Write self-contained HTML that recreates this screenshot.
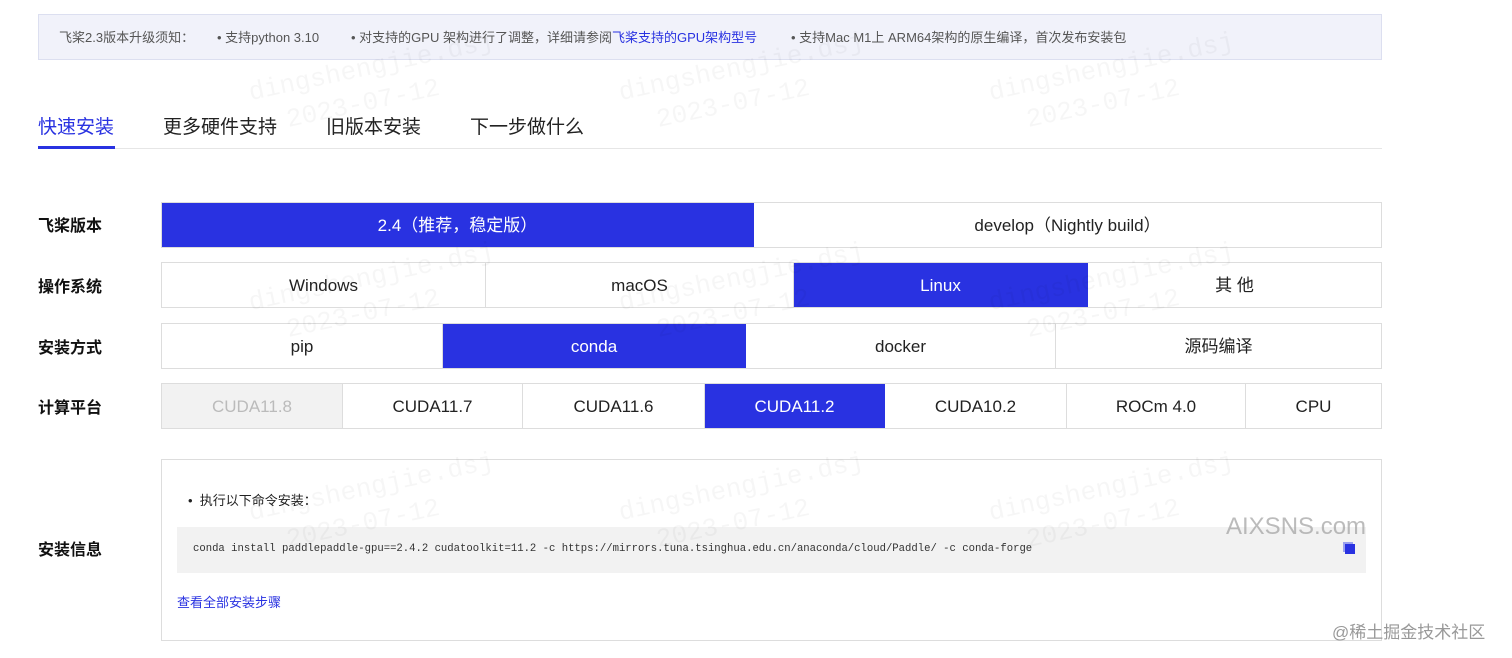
<!DOCTYPE html><html><head><meta charset="utf-8"><style>
body{margin:0;width:1512px;height:658px;background:#fff;font-family:"Liberation Sans","Noto Sans CJK SC",sans-serif;position:relative;overflow:hidden;color:#222}
.a{position:absolute}
.notice{left:38px;top:14px;width:1342px;height:44px;background:#f1f2fa;border:1px solid #dcdff0;font-size:13px;color:#555;line-height:46px}
.notice span{position:absolute;top:0}
.tab{top:112px;font-size:19px;color:#222}
.lbl{left:38px;font-size:16px;font-weight:bold;color:#111}
.row{left:161px;width:1219px;height:44px;border:1px solid #ddd;display:flex;box-sizing:content-box}
.row div{box-sizing:border-box;border-right:1px solid #ddd;text-align:center;line-height:46px;font-size:17px;color:#222;flex:none}
.row div:last-child{border-right:none}
.row .on{background:#2932e1;color:#fff;border-color:#2932e1}
.row .dis{background:#f2f2f2;color:#bbb}
.wm{color:rgba(0,0,0,0.035);font-family:"Liberation Mono",monospace;font-size:26px;transform:rotate(-12deg);line-height:34px}
</style></head><body>
<div class="a notice">
<span style="left:20px">飞桨2.3版本升级须知：</span>
<span style="left:178px">• 支持python 3.10</span>
<span style="left:312px">• 对支持的GPU 架构进行了调整，详细请参阅<span style="position:static;color:#2932e1">飞桨支持的GPU架构型号</span></span>
<span style="left:752px">• 支持Mac M1上 ARM64架构的原生编译，首次发布安装包</span>
</div>
<div class="a tab" style="left:38px;color:#2932e1">快速安装</div>
<div class="a tab" style="left:163px">更多硬件支持</div>
<div class="a tab" style="left:326px">旧版本安装</div>
<div class="a tab" style="left:470px">下一步做什么</div>
<div class="a" style="left:38px;top:148px;width:1344px;height:1px;background:#e6e6e6"></div>
<div class="a" style="left:38px;top:146px;width:77px;height:3px;background:#2932e1"></div>

<div class="a lbl" style="top:212px">飞桨版本</div>
<div class="a row" style="top:202px"><div class="on" style="width:592px">2.4（推荐，稳定版）</div><div style="width:627px">develop（Nightly build）</div></div>
<div class="a lbl" style="top:273px">操作系统</div>
<div class="a row" style="top:262px"><div style="width:324px">Windows</div><div style="width:308px">macOS</div><div class="on" style="width:294px">Linux</div><div style="width:293px">其 他</div></div>
<div class="a lbl" style="top:334px">安装方式</div>
<div class="a row" style="top:323px"><div style="width:281px">pip</div><div class="on" style="width:303px">conda</div><div style="width:310px">docker</div><div style="width:325px">源码编译</div></div>
<div class="a lbl" style="top:394px">计算平台</div>
<div class="a row" style="top:383px"><div class="dis" style="width:181px">CUDA11.8</div><div style="width:180px">CUDA11.7</div><div style="width:182px">CUDA11.6</div><div class="on" style="width:180px">CUDA11.2</div><div style="width:182px">CUDA10.2</div><div style="width:179px">ROCm 4.0</div><div style="width:135px">CPU</div></div>

<div class="a lbl" style="top:536px">安装信息</div>
<div class="a" style="left:161px;top:459px;width:1219px;height:180px;border:1px solid #ddd"></div>
<div class="a" style="left:188px;top:490px;font-size:13px">•&nbsp; 执行以下命令安装：</div>
<div class="a" style="left:177px;top:527px;width:1189px;height:46px;background:#f2f2f2"></div>
<div class="a" style="left:193px;top:543px;font-family:'Liberation Mono',monospace;font-size:10.6px;color:#333">conda install paddlepaddle-gpu==2.4.2 cudatoolkit=11.2 -c https://mirrors.tuna.tsinghua.edu.cn/anaconda/cloud/Paddle/ -c conda-forge</div>
<div class="a" style="left:1345px;top:544px;width:10px;height:10px;background:#2932e1;box-shadow:-2px -2px 0 #9aa0ee"></div>
<div class="a" style="left:1226px;top:513px;font-size:24px;color:rgba(160,160,160,0.7)">AIXSNS.com</div>
<div class="a" style="left:177px;top:592px;font-size:13px;color:#2932e1">查看全部安装步骤</div>
<div class="a" style="left:1332px;top:618px;font-size:17px;color:#999">@稀土掘金技术社区</div>

<div class="a wm" style="left:250px;top:50px">dingshengjie.dsj<br>&nbsp;&nbsp;2023-07-12</div>
<div class="a wm" style="left:620px;top:50px">dingshengjie.dsj<br>&nbsp;&nbsp;2023-07-12</div>
<div class="a wm" style="left:990px;top:50px">dingshengjie.dsj<br>&nbsp;&nbsp;2023-07-12</div>
<div class="a wm" style="left:250px;top:260px">dingshengjie.dsj<br>&nbsp;&nbsp;2023-07-12</div>
<div class="a wm" style="left:620px;top:260px">dingshengjie.dsj<br>&nbsp;&nbsp;2023-07-12</div>
<div class="a wm" style="left:990px;top:260px">dingshengjie.dsj<br>&nbsp;&nbsp;2023-07-12</div>
<div class="a wm" style="left:250px;top:470px">dingshengjie.dsj<br>&nbsp;&nbsp;2023-07-12</div>
<div class="a wm" style="left:620px;top:470px">dingshengjie.dsj<br>&nbsp;&nbsp;2023-07-12</div>
<div class="a wm" style="left:990px;top:470px">dingshengjie.dsj<br>&nbsp;&nbsp;2023-07-12</div>
</body></html>
